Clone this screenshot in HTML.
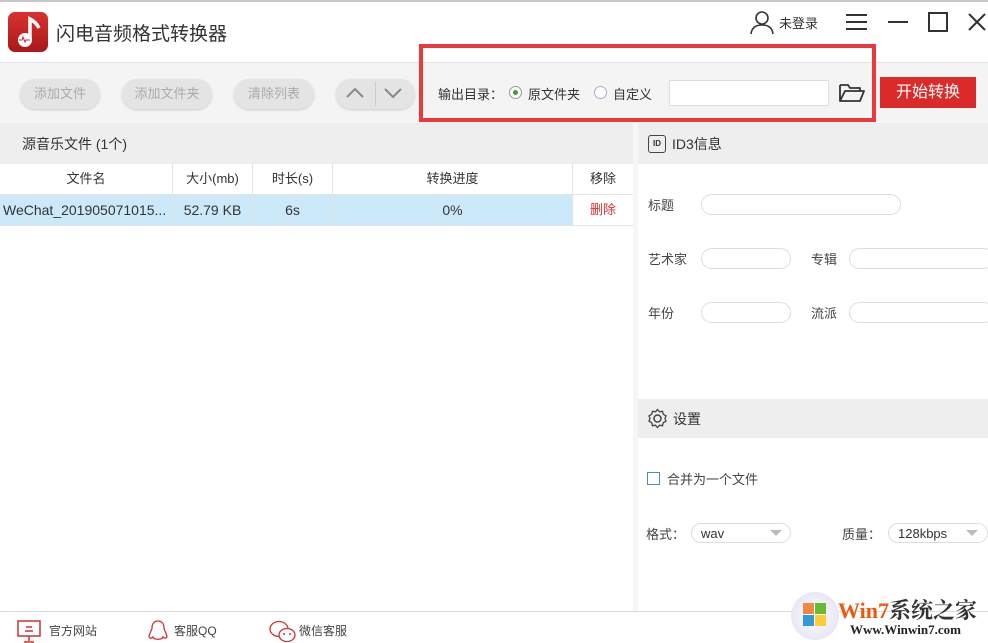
<!DOCTYPE html>
<html><head><meta charset="utf-8"><style>
*{margin:0;padding:0;box-sizing:border-box}
body{width:988px;height:643px;position:relative;overflow:hidden;background:#fff;font-family:"Liberation Sans","Noto Sans CJK SC",sans-serif;font-size:13px;color:#333}
.a{position:absolute}
.btn{position:absolute;top:79px;height:30px;border-radius:15px;background:#e4e4e4;color:#aaa;font-size:13px;line-height:30px;text-align:center;box-shadow:0 1px 2px #ccc}
.inp{position:absolute;height:21px;border:1px solid #ddd;border-radius:11px;background:#fff}
.lbl{position:absolute;font-size:13px;color:#444}
.th{position:absolute;top:164px;height:30px;line-height:30px;text-align:center;border-right:1px solid #e4e4e4}
.td{position:absolute;top:195px;height:30px;line-height:30px;text-align:center;border-right:1px solid #e4e4e4}
</style></head><body>
<div class="a" style="left:0;top:0;width:988px;height:2px;background:#c8c8c8"></div>
<div class="a" style="left:8px;top:12px;width:40px;height:40px;border-radius:7px;background:linear-gradient(#d9322e,#a9181a)"></div>
<svg class="a" style="left:8px;top:12px" width="40" height="40"><circle cx="17" cy="28" r="7" fill="#fff"/><path d="M22 28V7q6 3 9 9" stroke="#fff" stroke-width="3.5" fill="none"/><path d="M11 28h3l1-3 2 5 1-2h4" stroke="#c22" stroke-width="1" fill="none"/></svg>
<div class="a" style="left:56px;top:19px;font-size:19px;color:#333">闪电音频格式转换器</div>
<svg class="a" style="left:750px;top:9px" width="26" height="26"><circle cx="12" cy="9" r="6" stroke="#333" stroke-width="1.6" fill="none"/><path d="M1 25q1-9 11-9t11 9" stroke="#333" stroke-width="1.6" fill="none"/></svg>
<div class="a" style="left:779px;top:13px;font-size:13px">未登录</div>
<svg class="a" style="left:846px;top:13px" width="22" height="18"><path d="M0 2h21M0 9h21M0 16h21" stroke="#333" stroke-width="2"/></svg>
<div class="a" style="left:888px;top:21px;width:20px;height:2px;background:#333"></div>
<div class="a" style="left:928px;top:12px;width:20px;height:20px;border:2px solid #333"></div>
<svg class="a" style="left:967px;top:12px" width="20" height="20"><path d="M2 2l16 16M18 2L2 18" stroke="#333" stroke-width="2"/></svg>
<div class="a" style="left:0;top:62px;width:988px;height:61px;background:#f4f4f4;border-top:1px solid #e2e2e2"></div>
<div class="btn" style="left:20px;width:80px">添加文件</div>
<div class="btn" style="left:122px;width:90px">添加文件夹</div>
<div class="btn" style="left:234px;width:80px">清除列表</div>
<div class="btn" style="left:336px;width:79px"></div>
<div class="a" style="left:375px;top:82px;width:1px;height:24px;background:#ccc"></div>
<svg class="a" style="left:345px;top:86px" width="60" height="14"><path d="M2 11l8-8 8 8M40 3l8 8 8-8" stroke="#888" stroke-width="2" fill="none"/></svg>
<div class="a" style="left:419px;top:44px;width:457px;height:78px;border:4px solid #e8393d"></div>
<div class="lbl" style="left:438px;top:84px;color:#333">输出目录：</div>
<div class="a" style="left:509px;top:86px;width:13px;height:13px;border:1px solid #999;border-radius:50%;background:#fff"></div>
<div class="a" style="left:513px;top:90px;width:5px;height:5px;border-radius:50%;background:#4a9a2a"></div>
<div class="lbl" style="left:528px;top:84px;color:#333">原文件夹</div>
<div class="a" style="left:594px;top:86px;width:13px;height:13px;border:1px solid #aac;border-radius:50%;background:#fff"></div>
<div class="lbl" style="left:613px;top:84px;color:#333">自定义</div>
<div class="a" style="left:669px;top:80px;width:160px;height:26px;border:1px solid #ddd;background:#fff"></div>
<svg class="a" style="left:838px;top:82px" width="28" height="22"><path d="M2 3h8l2 3h10v3M2 3v16h20l4-10H7l-5 10" stroke="#333" stroke-width="1.8" fill="none" stroke-linejoin="round"/></svg>
<div class="a" style="left:880px;top:77px;width:96px;height:31px;background:#da2a2a;color:#fff;font-size:16px;line-height:31px;text-align:center">开始转换</div>
<div class="a" style="left:0;top:123px;width:633px;height:41px;background:#eeeeee"></div>
<div class="a" style="left:22px;top:134px;font-size:14px">源音乐文件 (1个)</div>
<div class="a" style="left:633px;top:123px;width:5px;height:490px;background:#f6f6f6"></div>
<div class="a" style="left:638px;top:123px;width:350px;height:41px;background:#eeeeee"></div>
<div class="a" style="left:648px;top:135px;width:18px;height:18px;border:1.5px solid #444;border-radius:3px;font-size:8px;font-weight:bold;line-height:15px;text-align:center">ID</div>
<div class="a" style="left:672px;top:134px;font-size:14px">ID3信息</div>
<div class="th" style="left:0;width:173px">文件名</div>
<div class="th" style="left:173px;width:80px">大小(mb)</div>
<div class="th" style="left:253px;width:80px">时长(s)</div>
<div class="th" style="left:333px;width:240px">转换进度</div>
<div class="th" style="left:573px;width:60px;border:none">移除</div>
<div class="a" style="left:0;top:194px;width:573px;height:31px;background:#cce9f9"></div>
<div class="a" style="left:0;top:225px;width:633px;height:1px;background:#e4e4e4"></div>
<div class="a" style="left:0;top:194px;width:633px;height:1px;background:#e4e4e4"></div>
<div class="td" style="left:0;width:173px;font-size:14px;text-align:left;padding-left:3px">WeChat_201905071015...</div>
<div class="td" style="left:173px;width:80px;font-size:14px">52.79 KB</div>
<div class="td" style="left:253px;width:80px;font-size:14px">6s</div>
<div class="td" style="left:333px;width:240px;font-size:14px">0%</div>
<div class="td" style="left:573px;width:60px;border:none;color:#e03030">删除</div>
<div class="lbl" style="left:648px;top:195px">标题</div>
<div class="inp" style="left:701px;top:194px;width:200px"></div>
<div class="lbl" style="left:648px;top:249px">艺术家</div>
<div class="inp" style="left:701px;top:248px;width:90px"></div>
<div class="lbl" style="left:811px;top:249px">专辑</div>
<div class="inp" style="left:849px;top:248px;width:145px"></div>
<div class="lbl" style="left:648px;top:303px">年份</div>
<div class="inp" style="left:701px;top:302px;width:90px"></div>
<div class="lbl" style="left:811px;top:303px">流派</div>
<div class="inp" style="left:849px;top:302px;width:145px"></div>
<div class="a" style="left:638px;top:399px;width:350px;height:39px;background:#eeeeee"></div>
<svg class="a" style="left:647px;top:408px" width="21" height="21"><circle cx="10.5" cy="10.5" r="3.5" stroke="#444" stroke-width="1.5" fill="none"/><path d="M10.5 1.5l2 2.3 3-.5.8 3 2.7 1.5-1 2.7 1 2.7-2.7 1.5-.8 3-3-.5-2 2.3-2-2.3-3 .5-.8-3-2.7-1.5 1-2.7-1-2.7 2.7-1.5.8-3 3 .5z" stroke="#444" stroke-width="1.3" fill="none"/></svg>
<div class="a" style="left:673px;top:409px;font-size:14px">设置</div>
<div class="a" style="left:647px;top:472px;width:13px;height:13px;border:1px solid #4a8ac8"></div>
<div class="lbl" style="left:667px;top:469px">合并为一个文件</div>
<div class="lbl" style="left:646px;top:524px">格式：</div>
<div class="inp" style="left:691px;top:523px;width:100px;height:20px;color:#333;font-size:13px;line-height:20px;padding-left:9px">wav</div>
<div class="a" style="left:770px;top:530px;border:6px solid transparent;border-top:6px solid #bbb"></div>
<div class="lbl" style="left:842px;top:524px">质量：</div>
<div class="inp" style="left:888px;top:523px;width:100px;height:20px;color:#333;font-size:13px;line-height:20px;padding-left:9px">128kbps</div>
<div class="a" style="left:966px;top:530px;border:6px solid transparent;border-top:6px solid #bbb"></div>
<div class="a" style="left:0;top:611px;width:988px;height:1px;background:#ddd"></div>
<svg class="a" style="left:17px;top:620px" width="26" height="23"><rect x="1" y="1" width="22" height="15" stroke="#c33" stroke-width="1.5" fill="none"/><path d="M9 7h6M8 11h8M12 16v5M7 22h10" stroke="#c33" stroke-width="1.5"/></svg>
<div class="lbl" style="left:49px;top:622px;font-size:12px">官方网站</div>
<svg class="a" style="left:148px;top:620px" width="20" height="23"><path d="M10 1c-4 0-6 3-6 7 0 2-3 6-3 9 1 2 3 1 4 0 1 3 9 3 10 0 1 1 3 2 4 0 0-3-3-7-3-9 0-4-2-7-6-7z" stroke="#c33" stroke-width="1.3" fill="none"/></svg>
<div class="lbl" style="left:174px;top:622px;font-size:12px">客服QQ</div>
<svg class="a" style="left:269px;top:619px" width="28" height="24"><ellipse cx="10" cy="10" rx="9" ry="7.5" stroke="#c33" stroke-width="1.3" fill="#fff"/><ellipse cx="18" cy="16" rx="8" ry="6.5" stroke="#c33" stroke-width="1.3" fill="#fff"/><circle cx="15" cy="15" r="1" fill="#c33"/><circle cx="21" cy="15" r="1" fill="#c33"/></svg>
<div class="lbl" style="left:299px;top:622px;font-size:12px">微信客服</div>
<div class="a" style="left:791px;top:592px;width:48px;height:48px;border-radius:50%;background:radial-gradient(#fff,#dde)"></div>
<div class="a" style="left:803px;top:603px;width:11px;height:11px;background:#e84"></div>
<div class="a" style="left:815px;top:603px;width:11px;height:11px;background:#6b3"></div>
<div class="a" style="left:803px;top:615px;width:11px;height:11px;background:#39d"></div>
<div class="a" style="left:815px;top:615px;width:11px;height:11px;background:#fc3"></div>
<div class="a" style="left:838px;top:594px;font-size:22px;font-weight:bold;color:#e85a10;font-family:'Liberation Serif','Noto Serif CJK SC',serif">Win7<span style="color:#333">系统之家</span></div>
<div class="a" style="left:850px;top:622px;font-size:13px;font-weight:bold;color:#222;font-family:'Liberation Serif',serif">Www.Winwin7.com</div>
</body></html>
